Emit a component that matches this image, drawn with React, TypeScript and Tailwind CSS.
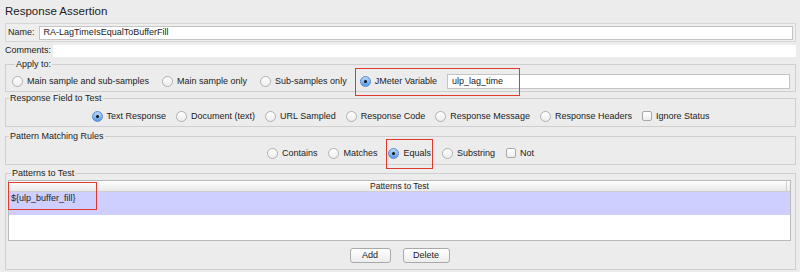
import React from "react";

function Radio({ checked }: { checked?: boolean }) {
  return checked ? (
    <span className="w-[11px] h-[11px] rounded-full border border-[#5a8acb] bg-gradient-to-b from-[#b6d7fa] to-[#5a9de6] flex items-center justify-center shrink-0">
      <span className="w-[3px] h-[3px] rounded-full bg-[#111]" />
    </span>
  ) : (
    <span className="w-[11px] h-[11px] rounded-full border border-[#b0b0b0] bg-gradient-to-b from-white to-[#ededed] shrink-0" />
  );
}

function Check() {
  return <span className="w-[10px] h-[10px] rounded-[2px] border border-[#a8a8a8] bg-gradient-to-b from-white to-[#eeeeee] shrink-0" />;
}

function Item({ checked, children }: { checked?: boolean; children: React.ReactNode }) {
  return (
    <span className="flex items-center gap-[4px] whitespace-nowrap">
      <Radio checked={checked} />
      <span>{children}</span>
    </span>
  );
}

export default function App() {
  return (
    <div className="w-[800px] h-[272px] overflow-hidden bg-[#ececec] text-[#222] font-['Liberation_Sans',Arial,sans-serif] text-[9px] leading-[11px] flex flex-col">
      <div className="h-[23px] pl-[5px] flex items-center text-[11.5px] text-[#222]">Response Assertion</div>

      <div className="mx-[5px] mr-[4px] h-[19px] border border-[#d6d6d6] bg-[#eeeeee] flex items-center pl-[2px] pr-[2px] gap-[4px]">
        <span>Name:</span>
        <div className="flex-1 h-[14px] bg-white border border-[#c4c4c4] flex items-center pl-[4px]">RA-LagTimeIsEqualToBufferFill</div>
      </div>

      <div className="h-[17px] pl-[5px] pr-[4px] flex items-center">
        <span className="w-[48px]">Comments:</span>
        <div className="flex-1 h-[12px] bg-white" />
      </div>

      <fieldset className="ml-[5px] mr-[4px] border border-[#cfcfcf] pl-[6px] pr-[5px] pt-[3px] pb-[2px]">
        <legend className="ml-[3px] px-[1px]">Apply to:</legend>
        <div className="h-[16px] flex items-center gap-[13px]">
          <Item>Main sample and sub-samples</Item>
          <Item>Main sample only</Item>
          <Item>Sub-samples only</Item>
          <span className="relative flex items-center">
            <Item checked>JMeter Variable</Item>
            <span className="absolute left-[-5px] top-[-8px] w-[165px] h-[28px] border-[1.5px] border-[#e2392f]" />
          </span>
          <div className="flex-1 h-[15px] ml-[-3px] bg-white border border-[#c4c4c4] flex items-center pl-[4px]">ulp_lag_time</div>
        </div>
      </fieldset>

      <fieldset className="mt-[1px] ml-[5px] mr-[4px] border border-[#cfcfcf] pt-[4px] pb-[2px]">
        <legend className="ml-[3px] px-[1px]">Response Field to Test</legend>
        <div className="h-[16px] flex items-center justify-center gap-[10px]">
          <Item checked>Text Response</Item>
          <Item>Document (text)</Item>
          <Item>URL Sampled</Item>
          <Item>Response Code</Item>
          <Item>Response Message</Item>
          <Item>Response Headers</Item>
          <span className="flex items-center gap-[4px]"><Check />Ignore Status</span>
        </div>
      </fieldset>

      <fieldset className="mt-[4px] ml-[5px] mr-[4px] border border-[#cfcfcf] pt-[3px] pb-[3px]">
        <legend className="ml-[3px] px-[1px]">Pattern Matching Rules</legend>
        <div className="h-[16px] flex items-center justify-center gap-[11px]">
          <Item>Contains</Item>
          <Item>Matches</Item>
          <span className="relative flex items-center">
            <Item checked>Equals</Item>
            <span className="absolute left-[-2px] top-[-9px] w-[47px] h-[30px] border-[1.5px] border-[#e2392f]" />
          </span>
          <Item>Substring</Item>
          <span className="flex items-center gap-[4px]"><Check />Not</span>
        </div>
      </fieldset>

      <fieldset className="mt-[3px] ml-[5px] mr-[4px] border border-[#cfcfcf] pl-[2px] pr-[4px] pt-[1px] pb-[6px]">
        <legend className="ml-[3px] px-[1px]">Patterns to Test</legend>
        <div className="relative h-[61px] bg-white border border-[#b9b9b9] flex flex-col">
          <div className="h-[11px] shrink-0 bg-gradient-to-b from-white to-[#e9e9e9] border-b border-[#cfcfcf] flex items-center justify-center text-[8.5px] relative">
            Patterns to Test
            <span className="absolute right-[3px] top-0 h-full w-px bg-[#d0d0d0]" />
          </div>
          <div className="h-[23px] shrink-0 bg-[#cfcfff] pl-[2px] pt-[1px]">{"${ulp_buffer_fill}"}</div>
          <span className="absolute left-[-1px] top-[1px] w-[89px] h-[28px] border-[1.5px] border-[#e2392f]" />
        </div>
        <div className="mt-[7px] flex justify-center gap-[12px]">
          <button className="w-[41px] h-[15px] rounded-[3px] border border-[#a9a9a9] bg-gradient-to-b from-white to-[#ededed] text-[9px] leading-[11px]">Add</button>
          <button className="w-[47px] h-[15px] rounded-[3px] border border-[#a9a9a9] bg-gradient-to-b from-white to-[#ededed] text-[9px] leading-[11px]">Delete</button>
        </div>
      </fieldset>
    </div>
  );
}
